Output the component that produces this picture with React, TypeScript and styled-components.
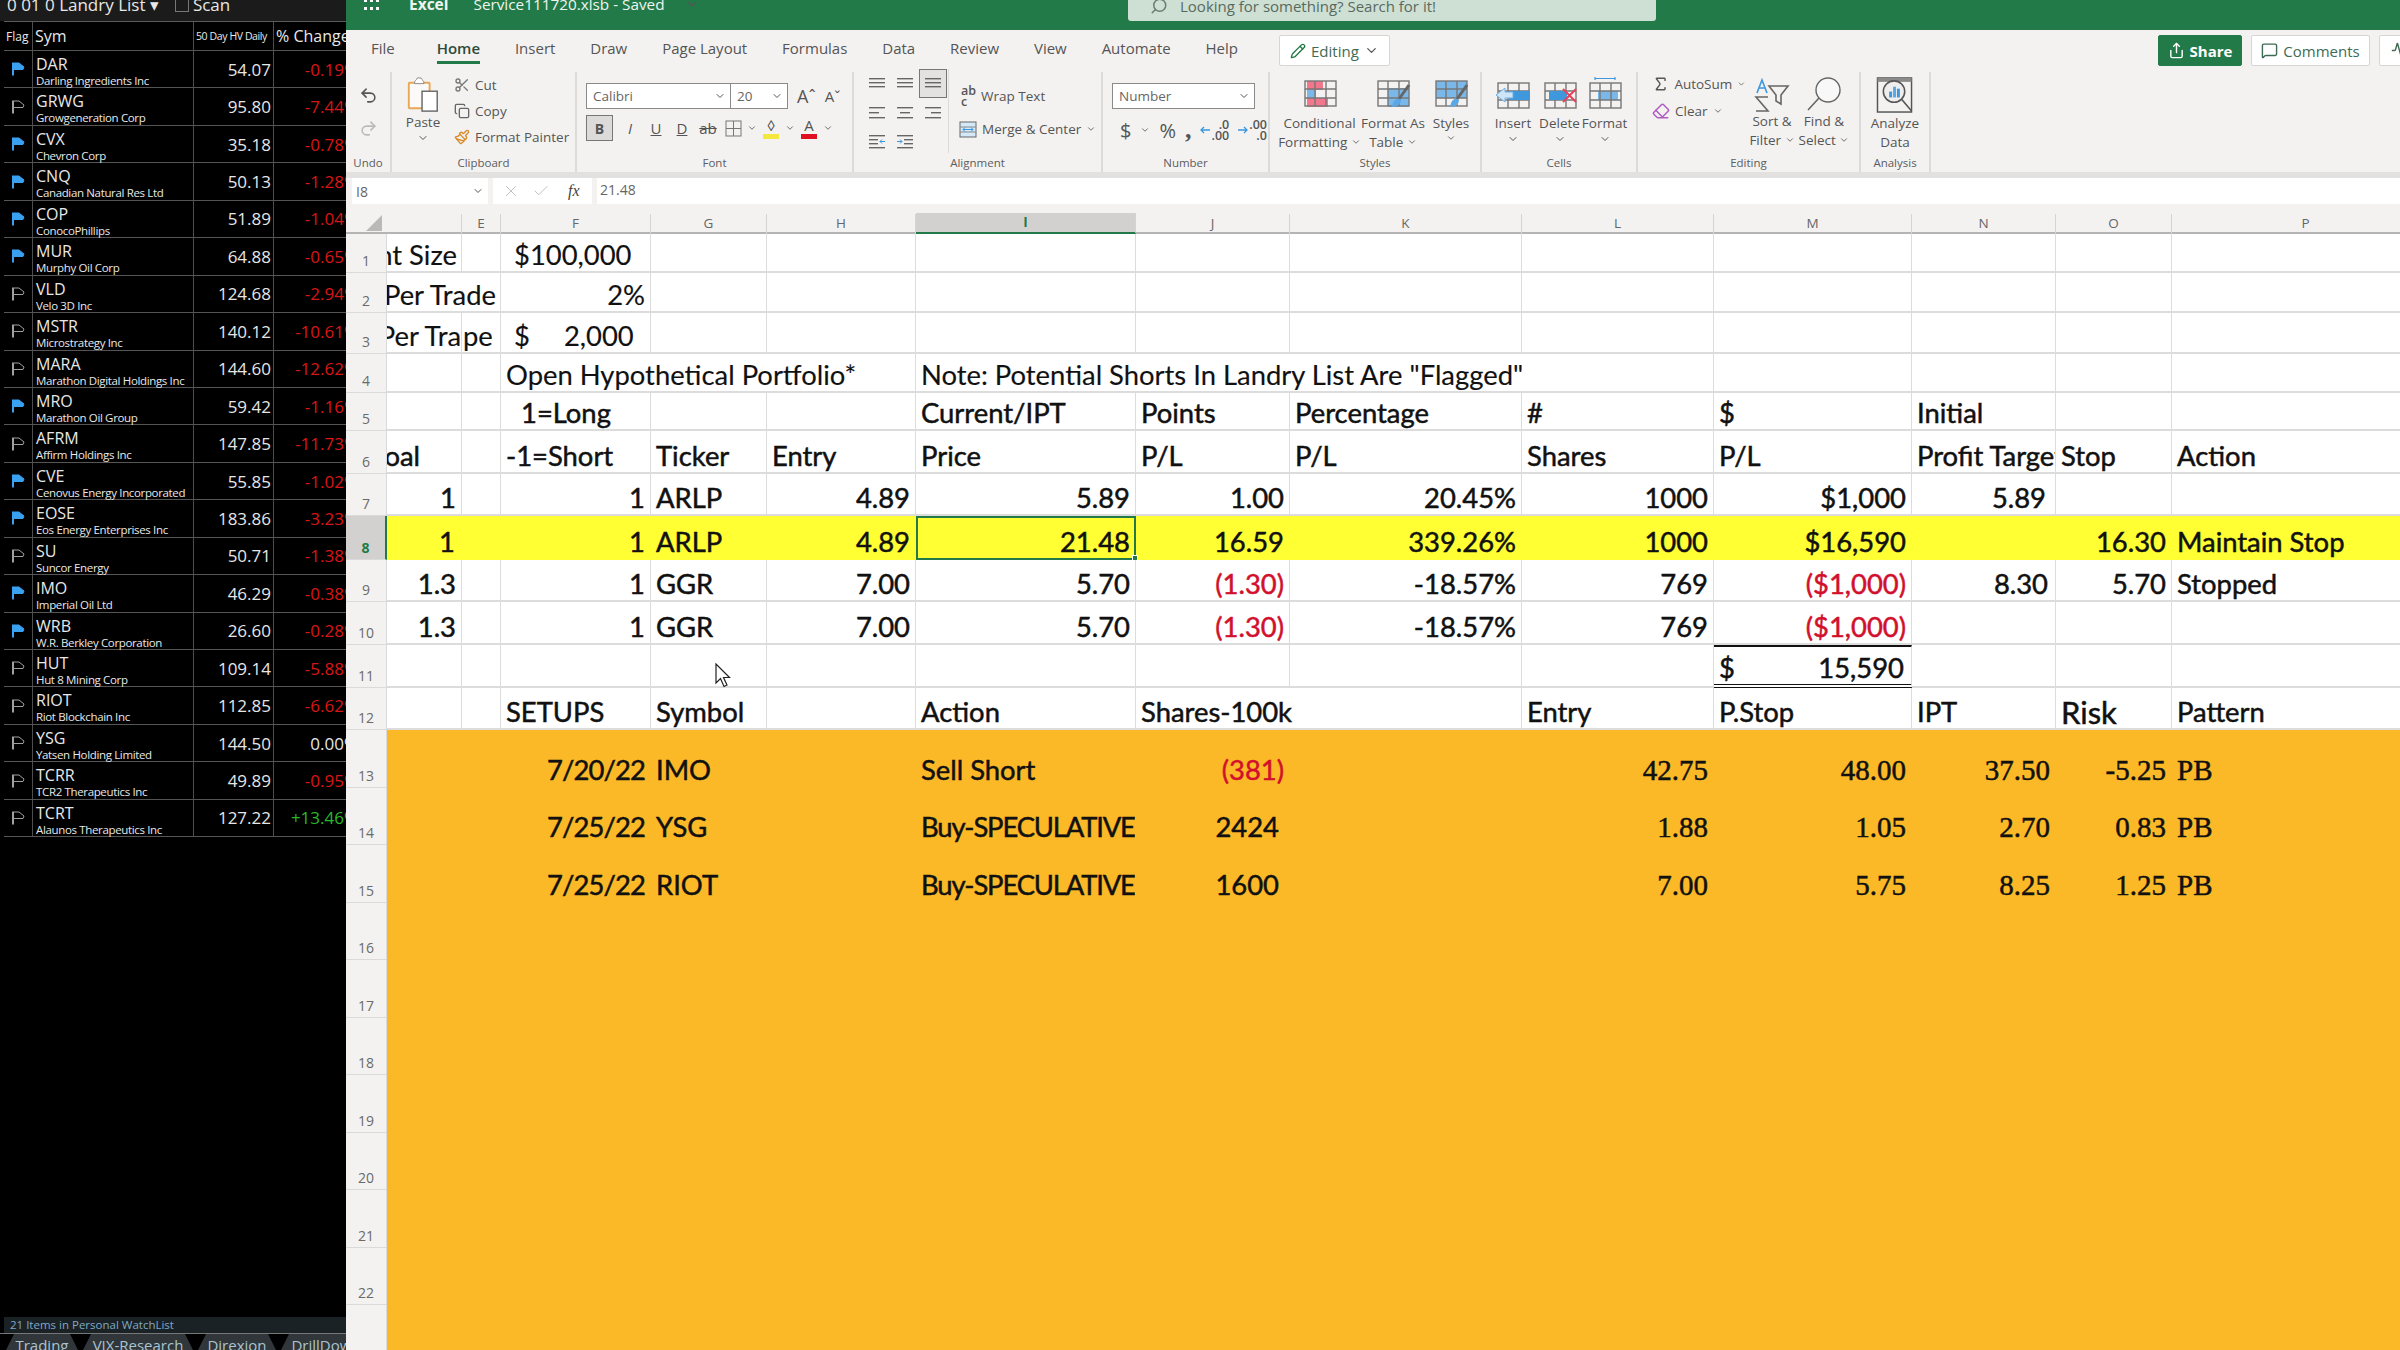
import React from 'react';
import styled, { createGlobalStyle } from 'styled-components';
import {
  Activity,
  ChevronDown,
  Check,
  Copy,
  Eraser,
  MessageSquare,
  Paintbrush,
  Pencil,
  Redo2,
  Scissors,
  Search,
  Share,
  Sigma,
  Undo2,
  X,
} from 'lucide-react';

const UI = '"Open Sans", "Noto Sans", sans-serif';
const SHEET = 'Lato, "Liberation Sans", sans-serif';
const SERIF = '"Liberation Serif", serif';
const GREEN = '#227a48';
const COLUMNS = '41px 75px 39px 150px 116px 149px 220px 154px 232px 192px 198px 144px 116px 268px';

const Global = createGlobalStyle`
  html, body { margin: 0; padding: 0; background: #000; }
  * { box-sizing: border-box; }
`;

const Page = styled.div`
  width: 2400px;
  height: 1350px;
  display: flex;
  overflow: hidden;
  font-family: ${UI};
`;

/* ---------- watch list ---------- */

const Watch = styled.aside`
  width: 346px;
  flex: none;
  height: 100%;
  background: #000;
  color: #e8e8e8;
  display: flex;
  flex-direction: column;
  overflow: hidden;
`;

const WatchTop = styled.div`
  height: 21px;
  flex: none;
  background: #1b1b1b;
  display: flex;
  align-items: center;
  gap: 16px;
  padding: 0 0 12px 7px;
  font-size: 17px;
  line-height: 20px;
  white-space: nowrap;
  overflow: hidden;
`;

const ScanLabel = styled.span`
  display: flex;
  align-items: center;
`;

const ScanBox = styled.span`
  width: 14px;
  height: 14px;
  border: 1px solid #777;
  display: inline-block;
  margin-right: 4px;
`;

const WatchGrid = styled.div<{ $head?: boolean }>`
  display: grid;
  grid-template-columns: 29px 161px 80px 84px;
  margin-left: 4px;
  width: 354px;
  height: ${(p) => (p.$head ? '30px' : '37.45px')};
  border-top: ${(p) => (p.$head ? '1px solid #5a5a5a' : '0')};
  border-bottom: 1px solid #555;
  flex: none;
`;

const WatchCell = styled.div<{ $line?: boolean; $color?: string }>`
  display: flex;
  align-items: center;
  justify-content: flex-end;
  border-right: ${(p) => (p.$line ? '1px solid #4d4d4d' : '0')};
  font-size: 17px;
  padding-right: ${(p) => (p.$line ? '2px' : '0')};
  color: ${(p) => p.$color || '#e6e6e6'};
  white-space: nowrap;
`;

const FlagCell = styled(WatchCell)`
  justify-content: center;
  padding: 0;
`;

const HeadCell = styled.div<{ $size: number }>`
  display: flex;
  align-items: center;
  border-right: 1px solid #4d4d4d;
  padding-left: 2px;
  font-size: ${(p) => p.$size}px;
  white-space: nowrap;
  letter-spacing: ${(p) => (p.$size < 12 ? '-0.4px' : '0')};
  overflow: hidden;
`;

const SymCell = styled.div`
  border-right: 1px solid #4d4d4d;
  padding: 3px 0 0 3px;
  display: flex;
  flex-direction: column;
  white-space: nowrap;
`;

const Ticker = styled.span`
  font-size: 16px;
  line-height: 20px;
`;

const Company = styled.span`
  font-size: 11.5px;
  line-height: 13px;
  letter-spacing: -0.35px;
`;

const WatchSpacer = styled.div`
  flex: 1;
`;

const WatchStatus = styled.div`
  height: 16px;
  flex: none;
  margin-left: 4px;
  background: #1b2226;
  color: #7fa9c4;
  font-size: 11.5px;
  line-height: 16px;
  padding-left: 6px;
`;

const WatchTabs = styled.div`
  height: 17px;
  flex: none;
  display: flex;
  gap: 5px;
  padding-left: 6px;
  border-top: 1px solid #777;
  overflow: hidden;
`;

const WatchTab = styled.span<{ $w: number }>`
  width: ${(p) => p.$w}px;
  flex: none;
  background: #30363a;
  color: #a9c4d1;
  font-size: 15px;
  line-height: 23px;
  text-align: center;
  white-space: nowrap;
  clip-path: polygon(8px 0, calc(100% - 8px) 0, 100% 100%, 0 100%);
`;

/* ---------- excel chrome ---------- */

const Excel = styled.main`
  flex: 1;
  min-width: 0;
  display: flex;
  flex-direction: column;
  background: #fff;
`;

const TitleBar = styled.header`
  height: 30px;
  flex: none;
  background: ${GREEN};
  color: #eef5f0;
  display: flex;
  align-items: flex-start;
  font-size: 15.3px;
  overflow: hidden;
`;

const TitleRow = styled.div`
  display: flex;
  align-items: center;
  height: 14px;
  margin-top: -3px;
  padding-left: 18px;
  margin-right: auto;
`;

const Waffle = styled.span`
  width: 17px;
  height: 14px;
  margin-right: 28px;
  margin-top: 3px;
  display: grid;
  grid-template-columns: repeat(3, 3px);
  gap: 3px;
  i { width: 3px; height: 3px; background: #fff; }
`;

const AppName = styled.b`
  font-weight: 700;
  font-size: 15.5px;
  margin-right: 25px;
`;

const FileName = styled.span`
  margin-right: 20px;
`;

const SearchBox = styled.div`
  width: 528px;
  height: 21px;
  margin-right: 744px;
  background: #cedfd4;
  color: #586a5f;
  border-radius: 0 0 3px 3px;
  padding-left: 22px;
  display: flex;
  align-items: center;
  gap: 12px;
  font-size: 15px;
  line-height: 14px;
  overflow: hidden;
  white-space: nowrap;
`;

const SearchText = styled.span`
  margin-top: -9px;
`;

const SearchGlass = styled(Search)`
  transform: scaleX(-1);
  margin-top: -10px;
  flex: none;
`;

const TabRow = styled.nav`
  height: 42px;
  flex: none;
  background: #f3f2f1;
  display: flex;
  align-items: flex-start;
  gap: 34.9px;
  padding: 5px 0 0 25px;
  font-size: 15px;
  color: #555;
  overflow: hidden;
`;

const Tab = styled.span<{ $on?: boolean; $first?: boolean }>`
  height: 29px;
  line-height: 26px;
  white-space: nowrap;
  margin-right: ${(p) => (p.$first ? 7 : 0)}px;
  border-bottom: 3px solid ${(p) => (p.$on ? GREEN : 'transparent')};
  color: ${(p) => (p.$on ? '#2f4a3a' : '#555')};
  font-weight: ${(p) => (p.$on ? 600 : 400)};
`;

const ChromeButton = styled.span<{ $w: number; $solid?: boolean }>`
  width: ${(p) => p.$w}px;
  height: 31px;
  flex: none;
  display: flex;
  align-items: center;
  justify-content: center;
  gap: 5px;
  border-radius: 2px;
  border: 1px solid ${(p) => (p.$solid ? GREEN : '#d6d6d6')};
  background: ${(p) => (p.$solid ? GREEN : '#fff')};
  color: ${(p) => (p.$solid ? '#fff' : '#3f6b55')};
  font-size: 15px;
  font-weight: ${(p) => (p.$solid ? 700 : 500)};
  overflow: hidden;
`;

const EditingButton = styled(ChromeButton)`
  margin-left: 6px;
  margin-right: auto;
`;

const ButtonGap = styled.div`
  display: flex;
  flex: none;
  gap: 9px;
  margin-left: -36px;
  margin-right: -19px;
`;

const Ribbon = styled.section`
  height: 106px;
  flex: none;
  display: flex;
  background: #f3f2f1;
  border-bottom: 6px solid #e3e1df;
  color: #555;
  font-size: 13.5px;
`;

const Group = styled.div<{ $w: number }>`
  width: ${(p) => p.$w}px;
  flex: none;
  display: flex;
  flex-direction: column;
  border-right: 2px solid #dcdbd9;
`;

const GroupBody = styled.div`
  flex: 1;
  display: flex;
  min-height: 0;
`;

const GroupLabel = styled.div`
  height: 20px;
  flex: none;
  text-align: center;
  font-size: 11.5px;
  line-height: 22px;
  color: #5c5c5c;
`;

const UndoStack = styled.div`
  flex: 1;
  display: flex;
  flex-direction: column;
  align-items: center;
  padding-top: 14px;
  gap: 14px;
`;

const BigButton = styled.div<{ $w: number; $lead?: number; $tail?: number }>`
  width: ${(p) => p.$w}px;
  margin-left: ${(p) => p.$lead ?? 0}px;
  flex: none;
  display: flex;
  flex-direction: column;
  align-items: center;
  text-align: center;
  font-size: 13.5px;
  line-height: 19px;
  white-space: nowrap;
  padding-top: 5px;
  svg.big { height: 36px; margin-bottom: ${(p) => p.$tail ?? 1}px; flex: none; }
`;

const SmallStack = styled.div<{ $gap?: number; $pad?: number; $lead?: number; $w?: number }>`
  display: flex;
  flex-direction: column;
  gap: ${(p) => p.$gap ?? 7}px;
  padding-top: ${(p) => p.$pad ?? 4}px;
  padding-left: ${(p) => p.$lead ?? 0}px;
  ${(p) => (p.$w ? `width: ${p.$w}px; flex: none;` : '')}
`;

const SmallRow = styled.div<{ $lead?: number }>`
  display: flex;
  align-items: center;
  gap: 5px;
  height: 20px;
  white-space: nowrap;
  padding-left: ${(p) => p.$lead ?? 0}px;
`;

const FontPanel = styled.div`
  padding: 11px 0 0 9px;
  display: flex;
  flex-direction: column;
  gap: 6px;
`;

const ComboRow = styled.div`
  display: flex;
  align-items: center;
  gap: 9px;
`;

const Combo = styled.div<{ $w: number; $line?: boolean }>`
  width: ${(p) => p.$w}px;
  height: 26px;
  background: #fff;
  border: 1px solid #8a8a8a;
  border-left-width: ${(p) => (p.$line ? 0 : 1)}px;
  display: flex;
  align-items: center;
  justify-content: space-between;
  padding: 0 4px 0 6px;
  font-size: 13.5px;
  color: #666;
`;

const ComboPair = styled.div`
  display: flex;
`;

const GrowA = styled.span<{ $size: number }>`
  font-size: ${(p) => p.$size}px;
`;

const ToolRow = styled.div`
  display: flex;
  align-items: center;
  gap: 8px;
  height: 26px;
  font-size: 15px;
`;

const BoldKey = styled.span`
  width: 27px;
  height: 26px;
  background: #dcdbda;
  border: 1px solid #777;
  display: flex;
  align-items: center;
  justify-content: center;
  font-weight: 700;
  font-size: 14px;
`;

const Key = styled.span<{ $bar?: string; $under?: boolean; $strike?: boolean; $italic?: boolean }>`
  width: 18px;
  flex: none;
  display: inline-flex;
  flex-direction: column;
  align-items: center;
  line-height: 17px;
  font-style: ${(p) => (p.$italic ? 'italic' : 'normal')};
  text-decoration: ${(p) => (p.$under ? 'underline' : p.$strike ? 'line-through' : 'none')};
  &::after {
    content: '';
    width: 16px;
    height: ${(p) => (p.$bar ? 5 : 0)}px;
    background: ${(p) => p.$bar || 'transparent'};
  }
`;

const MiniCaret = styled(ChevronDown)`
  margin: 0 -3px;
  flex: none;
`;

const AlignGrid = styled.div`
  display: grid;
  grid-template-columns: repeat(3, 28px);
  grid-auto-rows: 29px;
  padding: 0 0 0 9px;
  width: 95px;
  flex: none;
  border-right: 1px solid #dcdbd9;
  height: 84px;
  margin-top: -3px;
`;

const AlignSlot = styled.span<{ $on?: boolean }>`
  display: flex;
  align-items: center;
  justify-content: center;
  border: 1px solid ${(p) => (p.$on ? '#777' : 'transparent')};
  background: ${(p) => (p.$on ? '#e3e2e1' : 'transparent')};
`;

const NumberPanel = styled(FontPanel)`
  gap: 8px;
`;

const NumberTools = styled(ToolRow)`
  font-size: 20px;
  gap: 9px;
  padding-left: 8px;
`;

const Comma = styled.b`
  font-family: ${SERIF};
  font-size: 26px;
  line-height: 16px;
`;

const Decimal = styled.span`
  display: flex;
  align-items: center;
  gap: 1px;
`;

const Narrow = styled.span<{ $left?: boolean }>`
  font-size: 12.5px;
  line-height: 11px;
  font-weight: 600;
  color: #555;
  text-align: ${(p) => (p.$left ? 'left' : 'right')};
`;

const FormulaBar = styled.div`
  height: 26px;
  flex: none;
  display: flex;
  align-items: stretch;
  gap: 5px;
  padding-left: 6px;
  background: #f3f2f1;
  color: #666;
  font-size: 14px;
`;

const NameBox = styled.div`
  width: 136px;
  background: #fff;
  display: flex;
  align-items: center;
  justify-content: space-between;
  padding: 0 4px;
`;

const FxBox = styled.div`
  width: 99px;
  background: #fff;
  display: flex;
  align-items: center;
  gap: 12px;
  padding-left: 9px;
  color: #bbb;
`;

const FxMark = styled.i`
  font-family: ${SERIF};
  color: #444;
  font-size: 16px;
  margin-left: 6px;
`;

const FormulaInput = styled.div`
  flex: 1;
  background: #fff;
  padding-left: 3px;
  line-height: 24px;
`;

/* ---------- sheet ---------- */

const Sheet = styled.div`
  flex: 1;
  min-height: 0;
  position: relative;
  display: flex;
  flex-direction: column;
  overflow: hidden;
  font-family: ${SHEET};
`;

const ColHeader = styled.div`
  height: 30px;
  flex: none;
  display: grid;
  grid-template-columns: ${COLUMNS};
  background: #f3f2f1;
  border-bottom: 2px solid #b4b4b4;
`;

const ColLabel = styled.div<{ $on?: boolean }>`
  margin-top: ${(p) => (p.$on ? '9px' : '10px')};
  border-right: 1px solid #d4d4d4;
  border-bottom: ${(p) => (p.$on ? `2px solid ${GREEN}` : '0')};
  background: ${(p) => (p.$on ? '#d3d1cf' : 'transparent')};
  color: ${(p) => (p.$on ? GREEN : '#666')};
  font-family: ${UI};
  font-size: 13.5px;
  font-weight: ${(p) => (p.$on ? 700 : 400)};
  line-height: 19px;
  text-align: center;
`;

const Corner = styled.div`
  display: flex;
  align-items: flex-end;
  justify-content: flex-end;
  padding: 0 5px 3px 0;
`;

const SheetRow = styled.div<{ $h: number; $tone?: string }>`
  height: ${(p) => p.$h}px;
  flex: none;
  display: grid;
  grid-template-columns: ${COLUMNS};
  background: ${(p) => p.$tone || '#fff'};
`;

const RowLabel = styled.div<{ $on?: boolean }>`
  background: ${(p) => (p.$on ? '#d3d1cf' : '#f3f2f1')};
  border-bottom: 1px solid #dadada;
  border-right: ${(p) => (p.$on ? `2px solid ${GREEN}` : '1px solid #dadada')};
  color: ${(p) => (p.$on ? GREEN : '#6a6a6a')};
  font-family: ${UI};
  font-size: 14px;
  font-weight: ${(p) => (p.$on ? 700 : 400)};
  display: flex;
  align-items: flex-end;
  justify-content: center;
  line-height: 22px;
`;

const Cell = styled.div<{
  $span?: number;
  $right?: boolean;
  $bare?: boolean;
  $red?: boolean;
  $serif?: boolean;
  $strong?: boolean;
  $pad?: number;
  $total?: boolean;
  $active?: boolean;
  $big?: boolean;
  $tight?: number;
}>`
  grid-column: span ${(p) => p.$span ?? 1};
  display: flex;
  align-items: flex-end;
  justify-content: ${(p) => (p.$right ? 'flex-end' : 'flex-start')};
  overflow: hidden;
  white-space: nowrap;
  position: relative;
  font-family: ${(p) => (p.$serif ? SERIF : SHEET)};
  font-size: ${(p) => (p.$serif ? 29 : p.$big ? 31 : 27.4)}px;
  -webkit-text-stroke: ${(p) => (p.$strong ? '0.5px' : '0.15px')} currentColor;
  letter-spacing: ${(p) => p.$tight ?? 0}px;
  line-height: 32px;
  color: ${(p) => (p.$red ? '#d2102c' : '#111')};
  padding: 0 5px 0;
  ${(p) => (p.$right ? `padding-right: ${p.$pad ?? 5}px;` : `padding-left: ${p.$pad ?? 5}px;`)}
  border-right: 1px solid ${(p) => (p.$bare ? 'transparent' : '#dcdcdc')};
  border-bottom: 2px solid ${(p) => (p.$bare ? 'transparent' : '#dcdcdc')};
  ${(p) => p.$total && 'border-top: 2px solid #111; border-bottom: 4px double #111; justify-content: space-between; padding-right: 7px;'}
  ${(p) => p.$active && `outline: 2px solid ${GREEN}; outline-offset: -2px; overflow: visible;`}
`;

const FillHandle = styled.span`
  position: absolute;
  right: -3px;
  bottom: -3px;
  width: 6px;
  height: 6px;
  background: ${GREEN};
  border: 1px solid #fff;
`;

const Pointer = styled.svg`
  position: absolute;
  left: 369px;
  top: 459px;
  width: 16px;
  height: 25px;
`;

const AmountGap = styled.span`
  width: 34px;
  flex: none;
`;

type CellDef = {
  t?: string;
  span?: number;
  right?: boolean;
  red?: boolean;
  serif?: boolean;
  pad?: number;
  total?: boolean;
  after?: string;
  big?: boolean;
  tight?: number;
};

const L = (t: string, extra: Partial<CellDef> = {}): CellDef => ({ t, ...extra });
const R = (t: string, extra: Partial<CellDef> = {}): CellDef => ({ t, right: true, ...extra });
const E: CellDef = {};
const N = (t: string): CellDef => R(t, { serif: true });

type RowDef = { n: number; h: number; strong?: boolean; cells: CellDef[] };

const ROWS: RowDef[] = [
  { n: 1, h: 39, cells: [R('Account Size', { pad: 4 }), E, L('$100,000', { pad: 13 }), E, E, E, E, E, E, E, E, E, E] },
  { n: 2, h: 40, cells: [R('Per Trade', { span: 2, pad: 4 }), R('2%'), E, E, E, E, E, E, E, E, E, E] },
  { n: 3, h: 41, cells: [R('Per Tra', { pad: 0 }), L('pe', { pad: 1 }), L('$', { pad: 13, after: '2,000' }), E, E, E, E, E, E, E, E, E, E] },
  { n: 4, h: 39, cells: [E, E, L('Open Hypothetical Portfolio*', { span: 3 }), L('Note: Potential Shorts In Landry List Are "Flagged"', { span: 4 }), E, E, E, E] },
  { n: 5, h: 38, strong: true, cells: [E, E, L('1=Long', { pad: 20 }), E, E, L('Current/IPT'), L('Points'), L('Percentage'), L('#'), L('$'), L('Initial'), E, E] },
  { n: 6, h: 43, strong: true, cells: [R('Goal', { pad: 41 }), E, L('-1=Short'), L('Ticker'), L('Entry'), L('Price'), L('P/L'), L('P/L'), L('Shares'), L('P/L'), L('Profit Target'), L('Stop'), L('Action')] },
  { n: 7, h: 42, strong: true, cells: [R('1'), E, R('1'), L('ARLP'), R('4.89'), R('5.89'), R('1.00'), R('20.45%'), R('1000'), R('$1,000'), R('5.89', { pad: 9 }), E, E] },
  { n: 8, h: 44, strong: true, cells: [R('1', { span: 2, pad: 45 }), R('1'), L('ARLP'), R('4.89'), R('21.48'), R('16.59'), R('339.26%'), R('1000'), R('$16,590'), E, R('16.30'), L('Maintain Stop')] },
  { n: 9, h: 42, strong: true, cells: [R('1.3'), E, R('1'), L('GGR'), R('7.00'), R('5.70'), R('(1.30)', { red: true }), R('-18.57%'), R('769'), R('($1,000)', { red: true }), R('8.30', { pad: 7 }), R('5.70'), L('Stopped')] },
  { n: 10, h: 43, strong: true, cells: [R('1.3'), E, R('1'), L('GGR'), R('7.00'), R('5.70'), R('(1.30)', { red: true }), R('-18.57%'), R('769'), R('($1,000)', { red: true }), E, E, E] },
  { n: 11, h: 43, strong: true, cells: [E, E, E, E, E, E, E, E, E, { t: '15,590', total: true }, E, E, E] },
  { n: 12, h: 42, strong: true, cells: [E, E, L('SETUPS'), L('Symbol'), E, L('Action'), L('Shares-100k', { span: 2 }), L('Entry'), L('P.Stop'), L('IPT'), L('Risk', { big: true }), L('Pattern')] },
];

const SETUPS: CellDef[][] = [
  [E, E, R('7/20/22', { tight: -0.9 }), L('IMO'), E, L('Sell Short'), R('(381)', { red: true }), E, N('42.75'), N('48.00'), N('37.50'), N('-5.25'), L('PB', { serif: true })],
  [E, E, R('7/25/22', { tight: -0.9 }), L('YSG'), E, L('Buy-SPECULATIVE', { tight: -1.15 }), R('2424', { pad: 10 }), E, N('1.88'), N('1.05'), N('2.70'), N('0.83'), L('PB', { serif: true })],
  [E, E, R('7/25/22', { tight: -0.9 }), L('RIOT'), E, L('Buy-SPECULATIVE', { tight: -1.15 }), R('1600', { pad: 10 }), E, N('7.00'), N('5.75'), N('8.25'), N('1.25'), L('PB', { serif: true })],
];

const WATCH = [
  ['DAR', 'Darling Ingredients Inc', '54.07', '-0.19%', 1],
  ['GRWG', 'Growgeneration Corp', '95.80', '-7.44%', 0],
  ['CVX', 'Chevron Corp', '35.18', '-0.78%', 1],
  ['CNQ', 'Canadian Natural Res Ltd', '50.13', '-1.28%', 1],
  ['COP', 'ConocoPhillips', '51.89', '-1.04%', 1],
  ['MUR', 'Murphy Oil Corp', '64.88', '-0.65%', 1],
  ['VLD', 'Velo 3D Inc', '124.68', '-2.94%', 0],
  ['MSTR', 'Microstrategy Inc', '140.12', '-10.61%', 0],
  ['MARA', 'Marathon Digital Holdings Inc', '144.60', '-12.62%', 0],
  ['MRO', 'Marathon Oil Group', '59.42', '-1.16%', 1],
  ['AFRM', 'Affirm Holdings Inc', '147.85', '-11.73%', 0],
  ['CVE', 'Cenovus Energy Incorporated', '55.85', '-1.02%', 1],
  ['EOSE', 'Eos Energy Enterprises Inc', '183.86', '-3.23%', 1],
  ['SU', 'Suncor Energy', '50.71', '-1.38%', 0],
  ['IMO', 'Imperial Oil Ltd', '46.29', '-0.38%', 1],
  ['WRB', 'W.R. Berkley Corporation', '26.60', '-0.28%', 1],
  ['HUT', 'Hut 8 Mining Corp', '109.14', '-5.88%', 0],
  ['RIOT', 'Riot Blockchain Inc', '112.85', '-6.62%', 0],
  ['YSG', 'Yatsen Holding Limited', '144.50', '0.00%', 0],
  ['TCRR', 'TCR2 Therapeutics Inc', '49.89', '-0.95%', 0],
  ['TCRT', 'Alaunos Therapeutics Inc', '127.22', '+13.46%', 0],
] as const;

const COL_NAMES = ['', 'E', 'F', 'G', 'H', 'I', 'J', 'K', 'L', 'M', 'N', 'O', 'P'];

/* ---------- drawings ---------- */

const Flag = ({ on }: { on: boolean }) => (
  <svg width="13" height="14" viewBox="0 0 13 14">
    <path d="M1 0.5V13.5" stroke={on ? '#3aa0f0' : '#a0a0a0'} strokeWidth="2" />
    <path
      d="M2 1H7L12 5L11 7.5H2"
      fill={on ? '#3aa0f0' : 'none'}
      stroke={on ? '#3aa0f0' : '#a0a0a0'}
      strokeWidth="1"
    />
  </svg>
);

const AlignIcon = ({ kind }: { kind: string }) => {
  const widths =
    kind === 'mid' ? [[0, 16], [0, 16], [0, 16]] :
    kind === 'left' ? [[0, 16], [0, 10], [0, 16]] :
    kind === 'center' ? [[0, 16], [3, 10], [0, 16]] :
    [[0, 16], [6, 10], [0, 16]];
  const gap = kind === 'mid' ? 4 : 5;
  return (
    <svg width="17" height="15" viewBox="0 0 17 15">
      {widths.map(([x, w], i) => (
        <rect key={i} x={x} y={2 + i * gap} width={w} height="1.4" fill="#666" />
      ))}
    </svg>
  );
};

const IndentIcon = ({ flip }: { flip?: boolean }) => (
  <svg width="17" height="15" viewBox="0 0 17 15">
    <rect x="0" y="1" width="16" height="1.4" fill="#666" />
    <rect x={flip ? 7 : 0} y="5" width="9" height="1.4" fill="#666" />
    <rect x={flip ? 7 : 0} y="9" width="9" height="1.4" fill="#666" />
    <rect x="0" y="13" width="16" height="1.4" fill="#666" />
    <path d={flip ? 'M0 7.5H5M3 5.5L5 7.5L3 9.5' : 'M16 7.5H11M13 5.5L11 7.5L13 9.5'} stroke="#3a96dd" fill="none" />
  </svg>
);

const DecimalArrow = ({ back }: { back?: boolean }) => (
  <svg width="10" height="10" viewBox="0 0 10 10">
    <path d={back ? 'M10 5H1M4 2L1 5L4 8' : 'M0 5H9M6 2L9 5L6 8'} stroke="#3a96dd" strokeWidth="1.3" fill="none" />
  </svg>
);

const TableLines = ({ w = 33, h = 27 }: { w?: number; h?: number }) => (
  <g stroke="#777" strokeWidth="1.4" fill="none">
    <rect x="1" y="1" width={w - 2} height={h - 2} />
    <path d={`M${w / 3} 1V${h - 1}M${(2 * w) / 3} 1V${h - 1}M1 ${h / 3}H${w - 1}M1 ${(2 * h) / 3}H${w - 1}`} />
  </g>
);

const Brush = () => (
  <g>
    <path d="M34 8L24 22" stroke="#666" strokeWidth="3" />
    <path d="M18 26C20 21 24 21 26 23C26 27 22 30 17 30Z" fill="#5aa7e6" />
  </g>
);

const ConditionalIcon = () => (
  <svg className="big" width="36" height="36" viewBox="0 0 36 36">
    <rect x="5" y="4" width="16" height="9" fill="#f2778c" />
    <rect x="5" y="13" width="9" height="8" fill="#7ab8ea" />
    <rect x="5" y="21" width="21" height="9" fill="#f2778c" />
    <g transform="translate(2 3)"><TableLines /></g>
  </svg>
);

const TableIcon = () => (
  <svg className="big" width="36" height="36" viewBox="0 0 36 36">
    <rect x="13" y="11" width="21" height="19" fill="#7ab8ea" />
    <g transform="translate(2 3)"><TableLines /></g>
    <Brush />
  </svg>
);

const StylesIcon = () => (
  <svg className="big" width="36" height="36" viewBox="0 0 36 36">
    <rect x="3" y="4" width="31" height="17" fill="#7ab8ea" />
    <g transform="translate(2 3)"><TableLines /></g>
    <Brush />
  </svg>
);

const InsertIcon = () => (
  <svg className="big" width="36" height="36" viewBox="0 0 36 36">
    <g transform="translate(2 5)"><TableLines /></g>
    <rect x="14" y="14" width="21" height="9" fill="#3f97dc" />
    <path d="M1 18L10 11V15H18V21H10V25Z" fill="#cfe4f5" stroke="#6cb0e6" />
  </svg>
);

const DeleteIcon = () => (
  <svg className="big" width="36" height="36" viewBox="0 0 36 36">
    <g transform="translate(2 5)"><TableLines /></g>
    <rect x="7" y="14" width="18" height="9" fill="#3f97dc" />
    <path d="M21 12L34 25M34 12L21 25" stroke="#e8405a" strokeWidth="2" />
  </svg>
);

const FormatIcon = () => (
  <svg className="big" width="36" height="36" viewBox="0 0 36 36">
    <path d="M8 1.5H28M8 0V3M28 0V3" stroke="#3f97dc" strokeWidth="1.2" />
    <rect x="11" y="14" width="20" height="9" fill="#7ab8ea" />
    <g transform="translate(2 5)"><TableLines /></g>
  </svg>
);

const AnalyzeIcon = () => (
  <svg className="big" width="38" height="37" viewBox="0 0 38 37">
    <rect x="1" y="1" width="35" height="35" fill="none" stroke="#555" strokeWidth="1.5" />
    <rect x="1" y="1" width="35" height="4" fill="#8a8a8a" />
    <circle cx="18" cy="15" r="11" fill="#eee" stroke="#555" strokeWidth="1.6" />
    <rect x="13" y="15" width="3" height="6" fill="#3f97dc" />
    <rect x="17" y="10" width="3" height="11" fill="#5aa7e6" />
    <rect x="21" y="12" width="3" height="9" fill="#3f97dc" />
    <path d="M26 23L36 35" stroke="#555" strokeWidth="1.6" />
  </svg>
);

const PasteIcon = () => (
  <svg className="big" width="36" height="38" viewBox="0 0 36 38">
    <rect x="3" y="6" width="22" height="27" rx="1" fill="#fbfaf8" stroke="#e8a755" strokeWidth="2" />
    <path d="M9 7C9 3 11 4 12 1H16C17 4 19 3 19 7Z" fill="#fff" stroke="#888" />
    <rect x="17" y="15" width="16" height="21" fill="#fff" stroke="#666" strokeWidth="1.5" />
  </svg>
);

const SortIcon = () => (
  <svg className="big" width="36" height="36" viewBox="0 0 36 36">
    <path d="M2 34H14L2 20H14" fill="none" stroke="#666" strokeWidth="1.6" />
    <path d="M3 16L8 3L13 16M5 11H11" fill="none" stroke="#3f97dc" strokeWidth="1.6" />
    <path d="M15 9H34L27 18V27L22 24V18Z" fill="none" stroke="#666" strokeWidth="1.6" />
  </svg>
);

const FindIcon = () => (
  <svg className="big" width="36" height="36" viewBox="0 0 36 36">
    <circle cx="22" cy="13" r="12" fill="#f8f8f8" stroke="#666" strokeWidth="1.4" />
    <path d="M13 21L2 33" stroke="#666" strokeWidth="1.6" />
  </svg>
);

const Caret = ({ size = 12 }: { size?: number }) => <ChevronDown size={size} strokeWidth={2} color="#555" />;

const Cells = ({ defs, strong, bare, row }: { defs: CellDef[]; strong?: boolean; bare?: boolean; row?: number }) => {
  let col = 0;
  return (
    <>
      {defs.map((c, i) => {
        const at = col;
        col += c.span ?? 1;
        const active = row === 8 && at === 5;
        return (
          <Cell
            key={i}
            $span={c.span}
            $right={c.right}
            $red={c.red}
            $serif={c.serif}
            $pad={c.pad}
            $strong={strong}
            $bare={bare}
            $total={c.total}
            $active={active}
            $big={c.big}
            $tight={c.tight}
          >
            {c.total && <span>$</span>}
            {c.t}
            {c.after && <AmountGap />}
            {c.after}
            {active && <FillHandle />}
          </Cell>
        );
      })}
    </>
  );
};

const FILLER_ROWS = [16, 17, 18, 19, 20, 21, 22];

export default function App() {
  return (
    <Page>
      <Global />
      <Watch>
        <WatchTop>
          <span>0 01 0 Landry List ▾</span>
          <ScanLabel>
            <ScanBox />
            Scan
          </ScanLabel>
        </WatchTop>
        <WatchGrid $head>
          <HeadCell $size={12}>Flag</HeadCell>
          <HeadCell $size={16}>Sym</HeadCell>
          <HeadCell $size={10.5}>50 Day HV Daily</HeadCell>
          <HeadCell $size={16}>% Change</HeadCell>
        </WatchGrid>
        {WATCH.map(([sym, name, hv, pct, flagged]) => (
          <WatchGrid key={sym}>
            <FlagCell $line>
              <Flag on={flagged === 1} />
            </FlagCell>
            <SymCell>
              <Ticker>{sym}</Ticker>
              <Company>{name}</Company>
            </SymCell>
            <WatchCell $line>{hv}</WatchCell>
            <WatchCell $color={pct.startsWith('+') ? '#28b928' : pct.startsWith('-') ? '#d81616' : '#e6e6e6'}>
              {pct}
            </WatchCell>
          </WatchGrid>
        ))}
        <WatchSpacer />
        <WatchStatus>21 Items in Personal WatchList</WatchStatus>
        <WatchTabs>
          <WatchTab $w={72}>Trading</WatchTab>
          <WatchTab $w={110}>VIX-Research</WatchTab>
          <WatchTab $w={78}>Direxion</WatchTab>
          <WatchTab $w={90}>DrillDown</WatchTab>
        </WatchTabs>
      </Watch>

      <Excel>
        <TitleBar>
          <TitleRow>
            <Waffle>
              {Array.from({ length: 6 }).map((_, i) => (
                <i key={i} />
              ))}
            </Waffle>
            <AppName>Excel</AppName>
            <FileName>Service111720.xlsb - Saved</FileName>
            <Caret size={14} />
          </TitleRow>
          <SearchBox>
            <SearchGlass size={18} color="#6b7d71" />
            <SearchText>Looking for something? Search for it!</SearchText>
          </SearchBox>
        </TitleBar>

        <TabRow>
          {['File', 'Home', 'Insert', 'Draw', 'Page Layout', 'Formulas', 'Data', 'Review', 'View', 'Automate', 'Help'].map(
            (t) => (
              <Tab key={t} $on={t === 'Home'} $first={t === 'File'}>
                {t}
              </Tab>
            ),
          )}
          <EditingButton $w={111}>
            <Pencil size={16} color={GREEN} />
            Editing
            <Caret size={15} />
          </EditingButton>
          <ButtonGap>
            <ChromeButton $w={84} $solid>
              <Share size={17} />
              Share
            </ChromeButton>
            <ChromeButton $w={119}>
              <MessageSquare size={17} />
              Comments
            </ChromeButton>
            <ChromeButton $w={40}>
              <Activity size={17} />
            </ChromeButton>
          </ButtonGap>
        </TabRow>

        <Ribbon>
          <Group $w={46}>
            <GroupBody>
              <UndoStack>
                <Undo2 size={19} color="#555" />
                <Redo2 size={19} color="#bbb" />
              </UndoStack>
            </GroupBody>
            <GroupLabel>Undo</GroupLabel>
          </Group>

          <Group $w={185}>
            <GroupBody>
              <BigButton $w={62} $tail={0}>
                <PasteIcon />
                Paste
                <Caret />
              </BigButton>
              <SmallStack $gap={6} $pad={3}>
                <SmallRow>
                  <Scissors size={16} color="#777" />
                  Cut
                </SmallRow>
                <SmallRow>
                  <Copy size={16} color="#666" />
                  Copy
                </SmallRow>
                <SmallRow>
                  <Paintbrush size={16} color="#d98a2b" />
                  Format Painter
                </SmallRow>
              </SmallStack>
            </GroupBody>
            <GroupLabel>Clipboard</GroupLabel>
          </Group>

          <Group $w={277}>
            <GroupBody>
              <FontPanel>
                <ComboRow>
                  <ComboPair>
                    <Combo $w={145}>
                      Calibri
                      <Caret />
                    </Combo>
                    <Combo $w={57} $line>
                      20
                      <Caret />
                    </Combo>
                  </ComboPair>
                  <GrowA $size={18}>Aˆ</GrowA>
                  <GrowA $size={15}>Aˇ</GrowA>
                </ComboRow>
                <ToolRow>
                  <BoldKey>B</BoldKey>
                  <Key $italic>I</Key>
                  <Key $under>U</Key>
                  <Key $under>D</Key>
                  <Key $strike>ab</Key>
                  <svg width="17" height="17" viewBox="0 0 17 17">
                    <rect x="1" y="1" width="15" height="15" fill="none" stroke="#777" />
                    <path d="M8.5 1V16M1 8.5H16" stroke="#777" />
                  </svg>
                  <MiniCaret size={10} color="#555" />
                  <Key $bar="#f4e83c">◊</Key>
                  <MiniCaret size={10} color="#555" />
                  <Key $bar="#e01020">A</Key>
                  <MiniCaret size={10} color="#555" />
                </ToolRow>
              </FontPanel>
            </GroupBody>
            <GroupLabel>Font</GroupLabel>
          </Group>

          <Group $w={249}>
            <GroupBody>
              <AlignGrid>
                <AlignSlot><AlignIcon kind="mid" /></AlignSlot>
                <AlignSlot><AlignIcon kind="mid" /></AlignSlot>
                <AlignSlot $on><AlignIcon kind="mid" /></AlignSlot>
                <AlignSlot><AlignIcon kind="left" /></AlignSlot>
                <AlignSlot><AlignIcon kind="center" /></AlignSlot>
                <AlignSlot><AlignIcon kind="right" /></AlignSlot>
                <AlignSlot><IndentIcon /></AlignSlot>
                <AlignSlot><IndentIcon flip /></AlignSlot>
              </AlignGrid>
              <SmallStack $gap={13} $pad={14}>
                <SmallRow $lead={12}>
                  <Narrow $left>ab<br />c</Narrow>
                  Wrap Text
                </SmallRow>
                <SmallRow $lead={10}>
                  <svg width="18" height="17" viewBox="0 0 18 17">
                    <rect x="1" y="1" width="16" height="15" fill="#d5e8f7" stroke="#666" />
                    <path d="M1 6H17M1 11H17" stroke="#888" />
                    <path d="M4 8.5H14M6 6.5L4 8.5L6 10.5M12 6.5L14 8.5L12 10.5" stroke="#3a96dd" fill="none" />
                  </svg>
                  Merge &amp; Center
                  <Caret size={10} />
                </SmallRow>
              </SmallStack>
            </GroupBody>
            <GroupLabel>Alignment</GroupLabel>
          </Group>

          <Group $w={167}>
            <GroupBody>
              <NumberPanel>
                <Combo $w={143}>
                  Number
                  <Caret />
                </Combo>
                <NumberTools>
                  <span>$</span>
                  <Caret size={10} />
                  <span>%</span>
                  <Comma>,</Comma>
                  <Decimal>
                    <DecimalArrow back />
                    <Narrow>.0<br />.00</Narrow>
                  </Decimal>
                  <Decimal>
                    <DecimalArrow />
                    <Narrow>.00<br />.0</Narrow>
                  </Decimal>
                </NumberTools>
              </NumberPanel>
            </GroupBody>
            <GroupLabel>Number</GroupLabel>
          </Group>

          <Group $w={212}>
            <GroupBody>
              <BigButton $w={79} $lead={10}>
                <ConditionalIcon />
                Conditional
                <span>Formatting <Caret size={10} /></span>
              </BigButton>
              <BigButton $w={68}>
                <TableIcon />
                Format As
                <span>Table <Caret size={10} /></span>
              </BigButton>
              <BigButton $w={48}>
                <StylesIcon />
                Styles
                <Caret size={10} />
              </BigButton>
            </GroupBody>
            <GroupLabel>Styles</GroupLabel>
          </Group>

          <Group $w={156}>
            <GroupBody>
              <BigButton $w={48} $lead={7}>
                <InsertIcon />
                Insert
                <Caret />
              </BigButton>
              <BigButton $w={45}>
                <DeleteIcon />
                Delete
                <Caret />
              </BigButton>
              <BigButton $w={45}>
                <FormatIcon />
                Format
                <Caret />
              </BigButton>
            </GroupBody>
            <GroupLabel>Cells</GroupLabel>
          </Group>

          <Group $w={223}>
            <GroupBody>
              <SmallStack $gap={7} $pad={2} $lead={14} $w={108}>
                <SmallRow>
                  <Sigma size={20} color="#555" />
                  AutoSum
                  <Caret size={10} />
                </SmallRow>
                <SmallRow>
                  <Eraser size={18} color="#b05cc4" />
                  Clear
                  <Caret size={10} />
                </SmallRow>
              </SmallStack>
              <BigButton $w={52} $tail={-1}>
                <SortIcon />
                Sort &amp;
                <span>Filter <Caret size={10} /></span>
              </BigButton>
              <BigButton $w={52} $tail={-1}>
                <FindIcon />
                Find &amp;
                <span>Select <Caret size={10} /></span>
              </BigButton>
            </GroupBody>
            <GroupLabel>Editing</GroupLabel>
          </Group>

          <Group $w={70}>
            <GroupBody>
              <BigButton $w={68} $tail={1}>
                <AnalyzeIcon />
                Analyze
                <span>Data</span>
              </BigButton>
            </GroupBody>
            <GroupLabel>Analysis</GroupLabel>
          </Group>
        </Ribbon>

        <FormulaBar>
          <NameBox>
            I8
            <Caret />
          </NameBox>
          <FxBox>
            <X size={18} strokeWidth={1.2} />
            <Check size={18} strokeWidth={1.2} />
            <FxMark>fx</FxMark>
          </FxBox>
          <FormulaInput>21.48</FormulaInput>
        </FormulaBar>

        <Sheet>
          <ColHeader>
            <Corner>
              <svg width="16" height="16" viewBox="0 0 16 16">
                <path d="M16 0V16H0Z" fill="#b9b9b9" />
              </svg>
            </Corner>
            {COL_NAMES.map((c, i) => (
              <ColLabel key={i} $on={c === 'I'}>
                {c}
              </ColLabel>
            ))}
          </ColHeader>

          {ROWS.map((r) => (
            <SheetRow key={r.n} $h={r.h} $tone={r.n === 8 ? '#ffff33' : undefined}>
              <RowLabel $on={r.n === 8}>{r.n}</RowLabel>
              <Cells defs={r.cells} strong={r.strong} bare={r.n === 8} row={r.n} />
            </SheetRow>
          ))}

          {SETUPS.map((cells, i) => (
            <SheetRow key={i} $h={57.5} $tone="#fbb927">
              <RowLabel>{13 + i}</RowLabel>
              <Cells defs={cells} strong bare />
            </SheetRow>
          ))}

          {FILLER_ROWS.map((n) => (
            <SheetRow key={n} $h={57.5} $tone="#fbb927">
              <RowLabel>{n}</RowLabel>
            </SheetRow>
          ))}
          <SheetRow $h={50} $tone="#fbb927">
            <RowLabel />
          </SheetRow>

          <Pointer viewBox="0 0 16 25">
            <path d="M1 1V20L5.5 15.5L9 23.5L12 22L8.5 14.5H14.5Z" fill="#fff" stroke="#222" strokeWidth="1.2" />
          </Pointer>
        </Sheet>
      </Excel>
    </Page>
  );
}
